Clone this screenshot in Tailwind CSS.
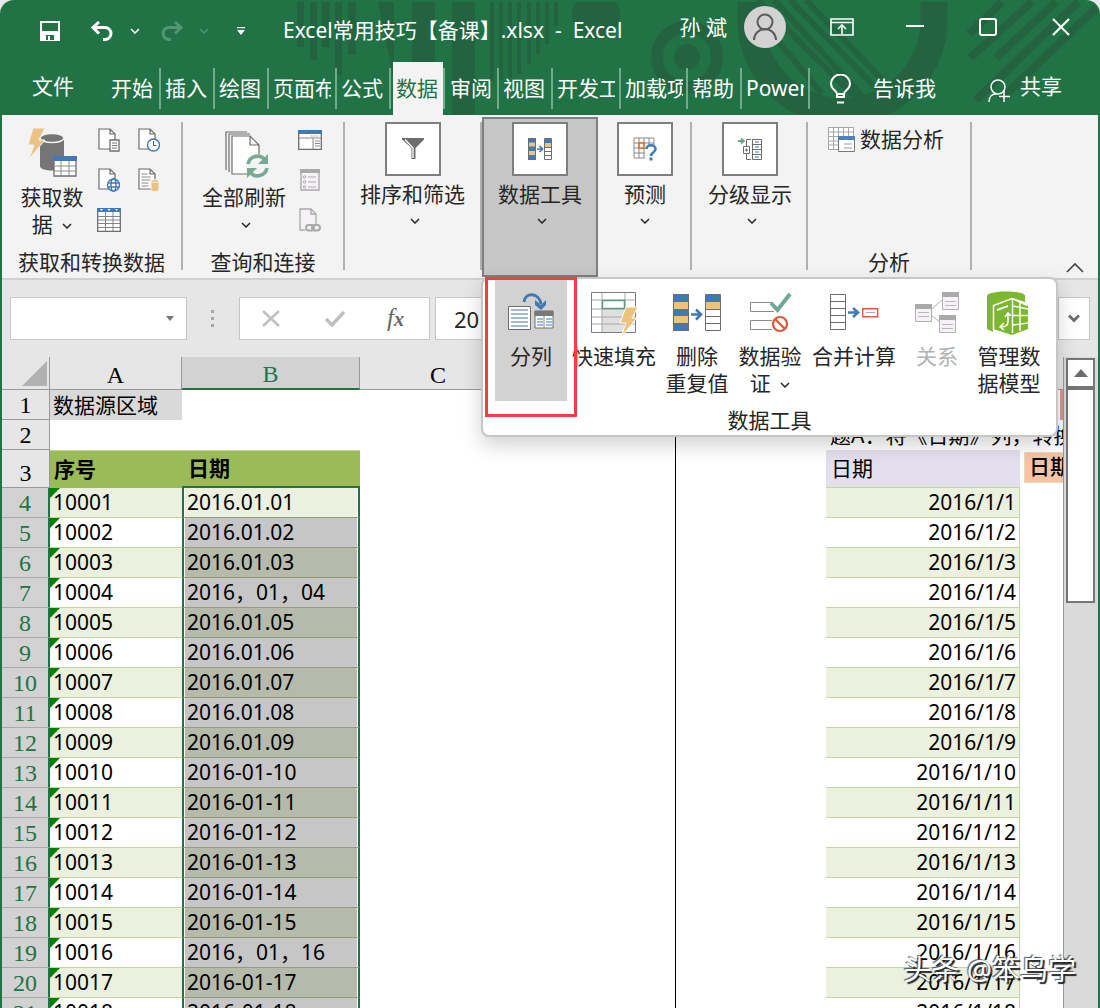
<!DOCTYPE html>
<html lang="zh-CN">
<head>
    <meta charset="UTF-8">
    <meta name="viewport" content="width=device-width, initial-scale=1.0">
    <title>Excel常用技巧【备课】.xlsx - Excel</title>
    <script src="https://cdn.jsdelivr.net/npm/@tailwindcss/browser@4"></script>
</head>
<body class="bg-[#e9e9e9] font-['Noto_Sans','Noto_Sans_CJK_SC',sans-serif] text-[21px] leading-[27px] text-[#262626]">

<!-- Shared icons -->
<svg class="hidden">
    <symbol id="chevron" viewBox="0 0 10 6"><path d="M1 1l4 4 4-4" fill="none" stroke="currentColor" stroke-width="1.5"/></symbol>
    <symbol id="page" viewBox="0 0 18 22"><path d="M1 1h11l5 5v15H1zM12 1v5h5" fill="#fff" stroke="#6d6d6d" stroke-width="1.2"/></symbol>
</svg>

<div class="relative flex h-screen flex-col overflow-hidden rounded-t-[14px] bg-[#217346]">

    <!-- Title bar and tabs -->
    <header class="relative shrink-0 text-white">
        <svg class="absolute inset-0 h-full w-full" viewBox="0 0 1100 115" preserveAspectRatio="xMidYMin slice" fill="#23633f" stroke="#23633f" stroke-width="0">
            <path d="M297 2h7v45h-7zM310 2h7v58h-7zM322 2h8v45h-8zM335 2h7v73h-7zM348 2h8v53h-8z"/>
            <path d="M378 2h16v78zM412 2h23v113h-23zM452 2h23v113h-23z"/>
            <path d="M490 2h4v80h-4zM499 2h4v78h-4zM508 2h4v76h-4zM517 2h4v72h-4zM527 2h4v62h-4zM536 2h4v52h-4zM545 2h4v42h-4zM554 2h4v24h-4z"/>
            <path d="M576 2h40a24 24 0 1 1-40 0z"/>
            <circle cx="687" cy="57" r="30" fill="none" stroke-width="12"/>
            <circle cx="687" cy="57" r="13"/>
            <path d="M751 2v18a90 90 0 0 0 183 0V2" fill="none" stroke-width="27"/>
            <path d="M758 0l104 104M774 0l90 98M790 0l94 96M752 10l70 84M806 0l86 90" stroke-width="6" fill="none"/>
            <path d="M1002 2l-33 32M1032 2l-62 56M1056 2l-60 56M1078 2l-102 98M1096 8l-96 92" stroke-width="8" fill="none"/>
        </svg>

        <div class="relative flex h-[62px] items-center pl-8">
            <button aria-label="保存" class="flex w-9 justify-center"><svg width="20" height="20" viewBox="0 0 20 20"><path d="M1 1h18v18H1z" fill="none" stroke="#fff" stroke-width="2"/><path d="M2 11h16" stroke="#fff" stroke-width="2"/><path d="M2 12h16v7H2z" fill="#fff"/><path d="M6 14h8v5H6z" fill="#217346"/><path d="M8 15h2v4H8z" fill="#fff"/></svg></button>
            <button aria-label="撤消" class="ml-[18px] flex w-8 justify-center"><svg width="24" height="20" viewBox="0 0 24 20" fill="none" stroke="#fff" stroke-width="3"><path d="M9 1L3 6.500l6 6M3 6.500h12a6 6 0 0 1 0 12h-2"/></svg></button>
            <button aria-label="撤消选项" class="ml-2 flex w-[18px] justify-center"><svg width="10" height="6"><use href="#chevron"/></svg></button>
            <button aria-label="恢复" class="ml-3 flex w-8 justify-center"><svg width="24" height="20" viewBox="0 0 24 20" fill="none" stroke="#539672" stroke-width="3"><path d="M15 1l6 5.500-6 6M21 6.500H9a6 6 0 0 0 0 12h2"/></svg></button>
            <button aria-label="恢复选项" class="ml-[7px] flex w-[18px] justify-center text-[#539672]"><svg width="10" height="6"><use href="#chevron"/></svg></button>
            <button aria-label="自定义快速访问工具栏" class="ml-[19px] flex w-[18px] justify-center"><svg width="8" height="8" viewBox="0 0 8 8" fill="#fff"><path d="M0 0h8v1.200H0zM0 3h8L4 8z"/></svg></button>
            <h1 class="ml-[33px] pb-[2px] whitespace-pre">Excel常用技巧【备课】.xlsx  -  Excel</h1>
            <div class="mr-[19px] ml-auto flex items-center pb-2">
                <span class="mr-[17px] whitespace-nowrap">孙 斌</span>
                <button aria-label="帐户" class="mr-9 size-[42px] rounded-full bg-[#d2d2d2]"><svg width="42" height="42" viewBox="0 0 42 42" fill="none" stroke="#5c5c5c" stroke-width="2"><circle cx="21" cy="16" r="7.500"/><path d="M10 34a11 11 0 0 1 22 0"/></svg></button>
                <button aria-label="功能区显示选项" class="mr-[33px] flex w-10 justify-center"><svg width="24" height="18" viewBox="0 0 24 18" fill="none" stroke="#fff" stroke-width="1.600"><path d="M1 1h22v16H1zM1 4.500h22M12 16V7M8 11l4-4 4 4"/></svg></button>
                <button aria-label="最小化" class="mr-[33px] flex w-10 justify-center"><svg width="18" height="18"><path d="M0 8h18" stroke="#fff" stroke-width="2"/></svg></button>
                <button aria-label="最大化" class="mr-[33px] flex w-10 justify-center"><svg width="18" height="18"><rect x="1" y="1" width="16" height="16" rx="2" fill="none" stroke="#fff" stroke-width="2"/></svg></button>
                <button aria-label="关闭" class="flex w-10 justify-center"><svg width="18" height="18"><path d="M1 1l16 16M17 1L1 17" stroke="#fff" stroke-width="2"/></svg></button>
            </div>
        </div>

        <nav class="relative flex h-[53px] items-center whitespace-nowrap">
            <a href="#" class="w-[107px] pb-1 pl-8">文件</a>
            <a href="#" class="flex h-[41px] w-[54px] items-center border-r-2 border-[#71ab89] pl-1">开始</a>
            <a href="#" class="flex h-[41px] w-[54px] items-center border-r-2 border-[#71ab89] pl-1">插入</a>
            <a href="#" class="flex h-[41px] w-[54px] items-center border-r-2 border-[#71ab89] pl-1">绘图</a>
            <a href="#" class="flex h-[41px] w-[68px] items-center border-r-2 border-[#71ab89] pl-1"><span class="w-[58px] overflow-hidden">页面布局</span></a>
            <a href="#" class="flex h-[41px] w-[54px] items-center border-r-2 border-[#71ab89] pl-1">公式</a>
            <a href="#" class="ml-[2px] flex h-full w-[50px] items-center bg-[#f3f3f3] pl-[3px] text-[#217346]">数据</a>
            <a href="#" class="flex h-[41px] w-[56px] items-center border-x-2 border-[#71ab89] pl-[5px]">审阅</a>
            <a href="#" class="flex h-[41px] w-[54px] items-center border-r-2 border-[#71ab89] pl-1">视图</a>
            <a href="#" class="flex h-[41px] w-[68px] items-center border-r-2 border-[#71ab89] pl-1"><span class="w-[58px] overflow-hidden">开发工具</span></a>
            <a href="#" class="flex h-[41px] w-[67px] items-center border-r-2 border-[#71ab89] pl-1"><span class="w-[58px] overflow-hidden">加载项</span></a>
            <a href="#" class="flex h-[41px] w-[54px] items-center border-r-2 border-[#71ab89] pl-1">帮助</a>
            <a href="#" class="flex h-[41px] w-[68px] items-center border-r-2 border-[#71ab89] pl-1"><span class="w-[58px] overflow-hidden">Power Pivot</span></a>
            <a href="#" class="ml-5 flex items-center gap-[22px]"><svg width="21" height="30" viewBox="0 0 21 30" fill="none" stroke="#fff" stroke-width="2"><path d="M7 23v-3c0-3-6-5-6-10a9.500 9.500 0 0 1 19 0c0 5-6 7-6 10v3zM7 20h7M7 28.500h7"/></svg>告诉我</a>
            <button class="mr-[38px] ml-auto flex items-center gap-[10px] pb-1"><svg class="mt-2" width="22" height="24" viewBox="0 0 22 24" fill="none" stroke="#fff" stroke-width="1.500"><circle cx="10" cy="8" r="7"/><path d="M1 23c0-5 3-8 7-8M16 12v11M11 17.500h11"/></svg>共享</button>
        </nav>
    </header>

    <div class="mx-[2px] flex min-h-0 flex-1 flex-col">

        <!-- Ribbon -->
        <section class="relative z-20 flex h-[165px] shrink-0 border-b-2 border-[#d0d0d0] bg-[#f3f3f3] whitespace-nowrap">
            <div class="flex w-[179px] flex-col justify-between pt-[5px] pb-[2px]">
                <div class="flex pl-4">
                    <button class="flex w-[68px] flex-col items-center pt-2">
                        <svg width="50" height="50" viewBox="0 0 50 50">
                            <path d="M13 10v28c0 6 24 6 24 0V10z" fill="#757575"/><ellipse cx="25" cy="10" rx="12" ry="4.500" fill="#757575" stroke="#f3f3f3" stroke-width="1.500"/>
                            <path d="M6 0h12l-6 12h6L2 31l5-14H1z" fill="#eac282" stroke="#f3f3f3"/>
                            <path d="M27 29h22v19H27z" fill="#fff" stroke="#6d6d6d" stroke-width="1.300"/><path d="M26 28h24v5H26z" fill="#4179b4"/><path d="M27 38h22M27 43h22M34 33v15M42 33v15" stroke="#8a8a8a"/>
                        </svg>
                        <span class="mt-[6px]">获取数<br>据 <svg class="ml-1 inline" width="10" height="6"><use href="#chevron"/></svg></span>
                    </button>
                    <div class="ml-[3px] grid auto-rows-[40px] grid-cols-[40px_40px] place-items-center">
                        <button aria-label="从文本/CSV"><svg width="22" height="24" viewBox="0 0 22 24"><use href="#page" width="18" height="22"/><path d="M12 12h9v11h-9z" fill="#fff" stroke="#6d6d6d" stroke-width="1.300"/><path d="M14 15h5M14 17.500h5M14 20h5" stroke="#777"/></svg></button>
                        <button aria-label="最近使用的源"><svg width="22" height="24" viewBox="0 0 22 24"><use href="#page" width="18" height="22"/><circle cx="15.500" cy="17" r="6" fill="#fff" stroke="#4179b4" stroke-width="1.400"/><path d="M15.500 13v4.500h3" fill="none" stroke="#555"/></svg></button>
                        <button aria-label="自网站"><svg width="22" height="24" viewBox="0 0 22 24"><use href="#page" width="18" height="22"/><g fill="#fff" stroke="#4179b4" stroke-width="1.400"><circle cx="15.500" cy="17" r="6"/><ellipse cx="15.500" cy="17" rx="2.500" ry="6"/><path d="M10 15h11M10 19h11"/></g></svg></button>
                        <button aria-label="现有连接"><svg width="22" height="24" viewBox="0 0 22 24"><use href="#page" width="18" height="22"/><path d="M3.500 6h6M3.500 9h9M3.500 12h9M3.500 15h7M3.500 18h7" stroke="#888"/><path d="M13 13v9c0 2 8 2 8 0v-9z" fill="#eac282" stroke="#f3f3f3"/><ellipse cx="17" cy="13" rx="4" ry="1.500" fill="#eac282" stroke="#fff" stroke-width=".7"/></svg></button>
                        <button aria-label="自表格/区域"><svg width="24" height="24" viewBox="0 0 24 24"><path d="M.7.7h22.600v22.600H.7z" fill="#fff" stroke="#6d6d6d" stroke-width="1.300"/><path d="M0 0h24v4H0z" fill="#4179b4"/><path d="M3 1h3L4.500 3zM10.500 1h3L12 3zM18 1h3l-1.500 2z" fill="#fff"/><path d="M1 8.500h22M1 12h22M1 15.500h22M1 19.500h22M8.500 4v19M16 4v19" stroke="#858585"/></svg></button>
                    </div>
                </div>
                <h2 class="text-center">获取和转换数据</h2>
            </div>
            <div class="mt-[7px] h-[148px] w-[2px] bg-[#b1b1b1]"></div>

            <div class="flex w-40 flex-col justify-between pt-[5px] pb-[2px]">
                <div class="flex pl-[17px]">
                    <button class="flex w-[88px] flex-col items-center pt-2">
                        <svg width="50" height="50" viewBox="0 0 50 50">
                            <path d="M7 42V4h21M10 44V6h21" fill="none" stroke="#6d6d6d" stroke-width="1.200"/>
                            <path d="M13 8h18l9 9v29H13zM31 8v9h9" fill="#fff" stroke="#6d6d6d" stroke-width="1.200"/>
                            <circle cx="38.500" cy="38" r="12" fill="#f3f3f3"/>
                            <path d="M29 36a9.500 9.500 0 0 1 17-4M48 40a9.500 9.500 0 0 1-17 4" fill="none" stroke="#77aa94" stroke-width="3.600"/><path d="M49 26v10H39zM28 50V40h10z" fill="#77aa94"/>
                        </svg>
                        <span class="mt-[6px] flex flex-col items-center">全部刷新<svg class="mt-[11px] ml-1" width="10" height="6"><use href="#chevron"/></svg></span>
                    </button>
                    <div class="ml-[2px] grid auto-rows-[40px] grid-cols-[40px] place-items-center">
                        <button aria-label="查询和连接"><svg width="24" height="20" viewBox="0 0 24 20"><path d="M.7.7h22.600v18.600H.7z" fill="#fff" stroke="#6d6d6d" stroke-width="1.300"/><path d="M0 0h24v4H0z" fill="#4179b4"/><path d="M15 8v11M1 8h22M17 11h5M17 13.500h5M17 16h5" stroke="#888"/><path d="M13 6h8" stroke="#999" stroke-dasharray="1.500 1"/></svg></button>
                        <button aria-label="属性"><svg width="20" height="22" viewBox="0 0 20 22"><path d="M1 1h18v20H1z" fill="#f6f2f7" stroke="#aaa" stroke-width="1.400"/><path d="M0 0h20v4H0z" fill="#aaa"/><path d="M8 8h8M8 13h8M8 18h8" stroke="#aaa"/><g fill="none" stroke="#aaa"><circle cx="4.500" cy="8" r="1.200"/><circle cx="4.500" cy="13" r="1.200"/><circle cx="4.500" cy="18" r="1.200"/></g></svg></button>
                        <button aria-label="编辑链接"><svg width="22" height="24" viewBox="0 0 22 24" fill="none" stroke="#aaa" stroke-width="1.300"><path d="M1 1h11l5 5v16H1zM12 1v5h5" fill="#f6f2f7"/><path d="M6 16h16v8H6z" fill="#f3f3f3" stroke="none"/><rect x="7" y="17" width="8" height="5.500" rx="2.700" stroke-width="2"/><rect x="13" y="17" width="8" height="5.500" rx="2.700" stroke-width="2"/></svg></button>
                    </div>
                </div>
                <h2 class="text-center">查询和连接</h2>
            </div>
            <div class="mt-[7px] h-[148px] w-[2px] bg-[#b1b1b1]"></div>

            <button class="flex w-[135px] flex-col items-center self-start pt-[7px]">
                <span class="flex h-[54px] w-14 items-center justify-center border-2 border-[#7f7f7f] bg-white"><svg width="22" height="22" viewBox="0 0 22 22"><path d="M0 0h22v1.500L13.500 10v11h-4V10L0 1.500z" fill="#6d6d6d"/><path d="M3 1.500l8 8.500v10" stroke="#fff" stroke-width="1.300" fill="none"/></svg></span>
                <span class="mt-[5px]">排序和筛选</span>
                <svg class="mt-[10px] ml-1" width="10" height="6"><use href="#chevron"/></svg>
            </button>
            <div class="mt-[7px] h-[148px] w-[2px] bg-[#b1b1b1]"></div>

            <div class="relative mt-[2px] h-40 w-[116px]">
                <button class="flex h-full w-full flex-col items-center border-2 border-[#7f7f7f] bg-[#c6c6c6] pt-[3px]">
                    <span class="flex h-[54px] w-14 items-center justify-center border-2 border-[#7f7f7f] bg-white"><svg width="24" height="22" viewBox="0 0 24 22"><path d="M0 0h8v22H0z" fill="#4179b4"/><path d="M1 4.500h6v4H1zM1 13h6v4H1z" fill="#eac282"/><path d="M.5.500h7v21h-7zM16.500.500h7v21h-7z" fill="none" stroke="#6d6d6d"/><path d="M17 1h6v4h-6z" fill="#4179b4"/><path d="M17 5h6v4h-6z" fill="#eac282"/><path d="M17 9.500h6M17 13.500h6M17 17.500h6" stroke="#6d6d6d"/><path d="M9 11h5M11.500 8l3 3-3 3" fill="none" stroke="#4179b4" stroke-width="1.700"/></svg></span>
                    <span class="mt-[5px]">数据工具</span>
                    <svg class="mt-[10px] ml-1" width="10" height="6"><use href="#chevron"/></svg>
                </button>

                <!-- Data tools drop-down -->
                <div class="absolute top-full -left-[1px] w-[577px] rounded-[8px] border-2 border-[#c6c6c6] bg-white shadow-[0_8px_20px_rgba(0,0,0,0.18)]">
                    <div class="flex gap-[2px] pt-[1px] pl-3">
                        <button class="flex h-[121px] w-[72px] flex-col items-center gap-[6px] bg-[#d2d2d2] pt-[11px]">
                            <svg width="50" height="46" viewBox="0 0 50 46"><path d="M2.500 15.500h22v23h-22z" fill="#fff" stroke="#6d6d6d"/><path d="M5 19h17M5 23h17M5 27h17M5 31h17M5 35h17" stroke="#4179b4" stroke-width="1.200"/><path d="M29 20h18v17H29z" fill="#fff" stroke="#6d6d6d"/><path d="M28.500 20h19v5h-19z" fill="#777"/><path d="M31 28h6M31 31h6M31 34h6M40 28h6M40 31h6M40 34h6" stroke="#4179b4"/><path d="M38 25v12" stroke="#888"/><path d="M18 11C19 1 33 1 35 13" fill="none" stroke="#4179b4" stroke-width="3"/><path d="M29 9l6 5 5-5v5l-5 5-6-5z" fill="#4179b4"/></svg>
                            <span>分列</span>
                        </button>
                        <button class="flex h-[121px] w-[90px] flex-col items-center gap-[6px] pt-[11px]">
                            <svg width="50" height="46" viewBox="0 0 50 46"><path d="M2.500 1.500h44v40h-44z" fill="#fff" stroke="#7b7b7b"/><path d="M13 18h23v23H13z" fill="#e0e0e0"/><path d="M3 9h43M3 18h43M3 26h43M3 33h43M13 2v39M36 2v39" stroke="#a6a6a6"/><path d="M13.500 9.500h22v8h-22z" fill="#fff" stroke="#5d9c83" stroke-width="1.500"/><path d="M37 16h12l-6 11h5L32 46l5-14h-6z" fill="#ecc27c" stroke="#fff"/></svg>
                            <span>快速填充</span>
                        </button>
                        <button class="flex h-[121px] w-[72px] flex-col items-center gap-[6px] pt-[11px]">
                            <svg width="50" height="46" viewBox="0 0 50 46"><path d="M1 3h16v37H1z" fill="#4179b4"/><path d="M2 11h14v7H2zM2 25h14v7H2z" fill="#ecc27c"/><path d="M1.500 3.500h15v36h-15zM33.500 3.500h15v36h-15z" fill="none" stroke="#6d6d6d"/><path d="M34 4h14v7H34z" fill="#4179b4"/><path d="M34 11h14v7H34z" fill="#ecc27c"/><path d="M34 18.500h14M34 25.500h14M34 32.500h14" stroke="#6d6d6d"/><path d="M19 23.500h9M24 18.500l5 5-5 5" fill="none" stroke="#4179b4" stroke-width="2.600"/></svg>
                            <span>删除<br>重复值</span>
                        </button>
                        <button class="flex h-[121px] w-[70px] flex-col items-center gap-[6px] pt-[11px]">
                            <svg width="50" height="46" viewBox="0 0 50 46"><path d="M27 11.500H5.500v9H29M27 29.500H5.500v9H27" fill="none" stroke="#8a8a8a"/><path d="M26 12l6.500 7L45 3" fill="none" stroke="#72a893" stroke-width="4"/><circle cx="35" cy="33" r="7" fill="#fff" stroke="#d8593c" stroke-width="2.200"/><path d="M30 28l10 10" stroke="#d8593c" stroke-width="2.200"/></svg>
                            <span>数据验<br>证 <svg class="ml-1 inline" width="10" height="6"><use href="#chevron"/></svg></span>
                        </button>
                        <button class="flex h-[121px] w-[94px] flex-col items-center gap-[6px] pt-[11px]">
                            <svg width="50" height="46" viewBox="0 0 50 46"><path d="M1.500 3.500h15v35h-15zM1.500 10.500h15M1.500 17.500h15M1.500 24.500h15M1.500 31.500h15" fill="none" stroke="#6d6d6d"/><path d="M19 21.500h8M24 17l5 4.500-5 4.500" fill="none" stroke="#4179b4" stroke-width="2.600"/><path d="M33.700 17.700h15v8h-15z" fill="#fff" stroke="#d8593c" stroke-width="1.400"/><path d="M37 21.500h9" stroke="#aaa"/></svg>
                            <span>合并计算</span>
                        </button>
                        <button disabled class="flex h-[121px] w-[68px] flex-col items-center gap-[6px] pt-[11px] text-[#b1b1b1]">
                            <svg width="50" height="46" viewBox="0 0 50 46"><path d="M19 19L31 8M19 24l10 8" stroke="#b1b1b1"/><path d="M3.500 13.500h16v17h-16zM30.500 1.500h16v17h-16zM27.500 24.500h16v17h-16z" fill="#f6f2f7" stroke="#b1b1b1"/><path d="M3 13h17v5H3zM30 1h17v5H30zM27 24h17v5H27z" fill="#aaa"/><path d="M6 21.500h11M6 25.500h11M33 10.500h11M33 14.500h11M30 33.500h11M30 37.500h11" stroke="#b9b9b9"/></svg>
                            <span>关系</span>
                        </button>
                        <button class="flex h-[121px] w-[72px] flex-col items-center gap-[6px] pt-[11px]">
                            <svg width="50" height="46" viewBox="0 0 50 46"><path d="M3 5c0-6 38-6 38 0v6L29 7 9 15v26l-6-3z" fill="#7cb82f"/><path d="M9 14l19-7 16 7v24l-16 6-19-6z" fill="#7cb82f"/><path d="M9.500 39V14.500L28 7.500l15.500 7" fill="none" stroke="#fff" stroke-width="1.500"/><path d="M28.500 8v34M36 11v29M29 15l15 3M29 24.500h15M29 34l15-2" stroke="#fff" stroke-width="1.400"/><path d="M13 20l11-4v-2l-11 4z" fill="#fff"/><path d="M24 23v8c0 4-4 5-8 5M21 26l3-4 3 3M20 32l-4 4 4 3" fill="none" stroke="#fff" stroke-width="1.500"/></svg>
                            <span>管理数<br>据模型</span>
                        </button>
                    </div>
                    <h2 class="mt-[6px] mb-[1px] text-center">数据工具</h2>
                    <div class="pointer-events-none absolute -top-[2px] left-[2px] h-[140px] w-[92px] border-3 border-[#fa3c3c]"></div>
                </div>
            </div>

            <button class="flex w-[94px] flex-col items-center self-start pt-[7px]">
                <span class="flex h-[54px] w-14 items-center justify-center border-2 border-[#7f7f7f] bg-white"><svg width="24" height="24" viewBox="0 0 24 24"><path d="M1 1h20v20H1zM6 1v20M11 1v20M16 1v20M1 6h20M1 11h20M1 16h20" fill="none" stroke="#8a8a8a"/><path d="M6 6h5v5H6z" fill="#fff" stroke="#e0671f" stroke-width="1.500"/><path d="M12 8h11v16H12z" fill="#fff"/><path d="M13.500 12c0-5 9-5 9 0 0 4-4.500 3-4.500 7" fill="none" stroke="#4179b4" stroke-width="2.600"/><path d="M16.500 20.500h3v3h-3z" fill="#4179b4"/></svg></span>
                <span class="mt-[5px]">预测</span>
                <svg class="mt-[10px]" width="10" height="6"><use href="#chevron"/></svg>
            </button>
            <div class="mt-[7px] -ml-[2px] h-[148px] w-[2px] bg-[#b1b1b1]"></div>

            <button class="flex w-[114px] flex-col items-center self-start pt-[7px] pl-[2px]">
                <span class="flex h-[54px] w-14 items-center justify-center border-2 border-[#7f7f7f] bg-white"><svg width="24" height="24" viewBox="0 0 24 24" fill="none" stroke="#6d6d6d"><path d="M13 2.500H8.500v7M13 22.500H8.500v-6M5.500 9.500h6v7h-6zM7 13h3M8.500 11.500v3M14.500 2.500h9v20h-9zM14.500 7.500h9M14.500 12.500h9M14.500 17.500h9"/><path d="M17 5h4M17 10h4M17 15h4M17 20h4" stroke="#4179b4"/><path d="M0 4h5M3 1.500L6 4 3 6.500" stroke="#6aa58c" stroke-width="1.800"/></svg></span>
                <span class="mt-[5px]">分级显示</span>
                <svg class="mt-[10px] ml-1" width="10" height="6"><use href="#chevron"/></svg>
            </button>
            <div class="mt-[7px] h-[148px] w-[2px] bg-[#b1b1b1]"></div>

            <div class="flex w-[162px] flex-col justify-between pt-[11px] pb-[2px]">
                <button class="flex items-center gap-[5px] pl-5"><svg width="27" height="27" viewBox="0 0 27 27"><path d="M.5 1.500h25v22H.5zM.5 6h25M.5 10.500h25M.5 15h25M.5 19h25M5.500 1.500v22M10.500 1.500v22M15.500 1.500v22M20.500 1.500v22" fill="#fff" stroke="#a6a6a6"/><path d="M10.500 10.500h16v15h-16z" fill="#fff" stroke="#777"/><path d="M10 10h17v4H10z" fill="#4a82bd"/><path d="M16 18h8M16 22h8" stroke="#999"/></svg>数据分析</button>
                <h2 class="text-center">分析</h2>
            </div>
            <div class="mt-[7px] h-[148px] w-[2px] bg-[#b1b1b1]"></div>
            <button aria-label="折叠功能区" class="mr-[14px] mb-[5px] ml-auto self-end"><svg width="18" height="11"><path d="M1 10l8-8 8 8" fill="none" stroke="#444" stroke-width="1.600"/></svg></button>
        </section>

        <!-- Formula bar -->
        <div class="flex shrink-0 items-center bg-[#e6e6e6] pt-[17px] pr-2 pb-[17px] pl-2">
            <div class="flex h-[43px] w-[177px] items-center border border-[#c6c6c6] bg-white pr-3">
                <input aria-label="名称框" class="min-w-0 flex-1 px-2 outline-none">
                <button aria-label="名称列表"><svg width="8" height="5"><path d="M0 0h8L4 5z" fill="#777"/></svg></button>
            </div>
            <svg class="ml-[24px]" width="3" height="17" fill="#a6a6a6"><path d="M0 0h3v3H0zM0 7h3v3H0zM0 14h3v3H0z"/></svg>
            <div class="ml-[25px] flex h-[43px] w-[191px] items-center border border-[#c6c6c6] bg-white pl-[22px]">
                <button aria-label="取消"><svg width="18" height="17"><path d="M1 1l16 15M17 1L1 16" stroke="#c0c0c0" stroke-width="2.500"/></svg></button>
                <button aria-label="输入" class="ml-[45px]"><svg width="20" height="17"><path d="M1 9l6 6L19 2" fill="none" stroke="#c0c0c0" stroke-width="3.500"/></svg></button>
                <button aria-label="插入函数" class="ml-[42px] font-['Liberation_Serif',serif] text-[25px] text-[#666] italic">f<span class="text-[20px] font-bold">x</span></button>
            </div>
            <input aria-label="编辑栏" value="2016.01.01" class="ml-[5px] h-[43px] min-w-0 flex-1 border border-[#c6c6c6] bg-white pl-[18px] text-[22px] outline-none">
            <button aria-label="展开编辑栏" class="flex h-[43px] w-8 items-center justify-center border border-[#c6c6c6] bg-white"><svg width="12" height="9"><path d="M1 1.500l5 5 5-5" fill="none" stroke="#6d6d6d" stroke-width="3"/></svg></button>
        </div>

        <!-- Worksheet -->
        <div class="flex min-h-0 flex-1">
            <div class="min-w-0 flex-1 overflow-hidden bg-white">
                <table class="w-[1240px] table-fixed border-separate border-spacing-0 whitespace-nowrap text-black">
                    <colgroup>
                        <col class="w-12"><col class="w-[132px]"><col class="w-[178px]"><col class="w-[156px]"><col class="w-[160px]"><col class="w-[150px]"><col class="w-[194px]"><col class="w-[4px]"><col>
                    </colgroup>
                    <thead>
                        <tr class="h-[33px] bg-[#e6e6e6] font-['Liberation_Serif',serif] text-[24px]">
                            <th class="border-r border-b border-[#999] bg-[#e6e6e6] p-0"><svg class="mr-[2px] ml-auto" width="25" height="25"><path d="M25 0v25H0z" fill="#b1b1b1"/></svg></th>
                            <th class="border-r border-b border-[#999] p-0 pt-1 font-normal">A</th>
                            <th class="border-r border-b-2 border-r-[#999] border-b-[#217346] bg-[#d2d2d2] p-0 pt-1 font-normal text-[#217346]">B</th>
                            <th class="border-b border-[#999] p-0 pt-1 font-normal">C</th>
                            <th class="border-b border-[#999] p-0 pt-1 font-normal">D</th>
                            <th class="border-b border-[#999] p-0 pt-1 font-normal">E</th>
                            <th class="border-b border-[#999] p-0 pt-1 font-normal">F</th>
                            <th class="border-b border-[#999] p-0"></th>
                            <th class="border-b border-[#999] p-0"></th>
                        </tr>
                    </thead>
                    <tbody id="rows">
                        <tr class="h-[30px]">
                            <th class="border-r border-b border-[#999] bg-[#e6e6e6] p-0 align-bottom font-['Liberation_Serif',serif] text-[24px] font-normal">1</th>
                            <td class="bg-[#d9d9d9] p-0 pl-[3px]">数据源区域</td>
                            <td></td><td></td><td class="border-r border-black"></td><td></td><td></td><td></td>
                            <td class="p-0 pl-9"><div class="h-[30px] bg-[#d99694]"></div></td>
                        </tr>
                        <tr class="h-[30px]">
                            <th class="border-r border-b border-[#999] bg-[#e6e6e6] p-0 align-bottom font-['Liberation_Serif',serif] text-[24px] font-normal">2</th>
                            <td></td><td></td><td></td><td class="border-r border-black"></td><td></td>
                            <td class="p-0 pl-1" colspan="3">题A：将《日期》列，转换为日期格式</td>
                        </tr>
                        <tr class="h-[38px]">
                            <th class="border-r border-b border-[#999] bg-[#e6e6e6] p-0 align-bottom font-['Liberation_Serif',serif] text-[24px] font-normal">3</th>
                            <td class="border-t border-[#c4d79b] bg-[#9bbb59] p-0 pl-1 font-bold">序号</td>
                            <td class="border-t border-b-2 border-t-[#c4d79b] border-b-[#217346] bg-[#9bbb59] p-0 pl-[6px] font-bold">日期</td>
                            <td></td><td class="border-r border-black"></td><td></td>
                            <td class="border-b border-[#c4d79b] bg-[#e4dfec] p-0 pl-[5px]">日期</td>
                            <td></td>
                            <td class="p-0"><div class="mb-1 h-[31px] border border-[#ead9b8] bg-[#f6c4a4] pl-1 font-medium">日期</div></td>
                        </tr>
                    </tbody>
                </table>
            </div>

            <!-- Vertical scroll bar -->
            <div class="flex w-[35px] shrink-0 flex-col border-l border-[#999] bg-[#dadada] pt-[1px] pr-[3px] pl-[2px]">
                <button aria-label="向上滚动" class="flex h-[30px] items-center justify-center border-2 border-[#757575] bg-white"><svg width="14" height="8"><path d="M0 8h14L7 0z" fill="#6d6d6d"/></svg></button>
                <div class="h-[215px] border-2 border-[#757575] bg-white"></div>
            </div>
        </div>
    </div>

    <div class="absolute right-6 bottom-6 z-30 text-[28px] leading-[30px] text-white [text-shadow:2px_2px_1px_#222,-1px_-1px_1px_#555]">头条 @笨鸟学</div>
</div>

<script>
    const dates = [
        "2016.01.01", "2016.01.02", "2016.01.03", "2016，01，04", "2016.01.05", "2016.01.06",
        "2016.01.07", "2016.01.08", "2016.01.09", "2016-01-10", "2016-01-11", "2016-01-12",
        "2016-01-13", "2016-01-14", "2016-01-15", "2016，01，16", "2016-01-17", "2016-01-18"
    ];

    let html = "";
    dates.forEach((date, i) => {
        const band = i % 2 === 0 ? "bg-[#ebf1de]" : "bg-white";
        let selected = i % 2 === 0 ? "bg-[#b6baab]" : "bg-[#c6c6c6]";
        // the active cell keeps its own fill
        if (i === 0) selected = "bg-[#ebf1de]";

        html += `
            <tr class="h-[30px]">
                <th class="border-r-2 border-b border-r-[#217346] border-b-[#aaa] bg-[#d2d2d2] p-0 align-bottom font-['Liberation_Serif',serif] text-[24px] font-normal text-[#217346]">${i + 4}</th>
                <td class="relative border-b border-[#c4d79b] p-0 pl-[3px] ${band}"><span class="absolute top-0 left-0 border-t-[10px] border-r-[10px] border-t-[#008000] border-r-transparent"></span>${10001 + i}</td>
                <td class="border-x-2 border-b border-x-[#217346] border-b-[#939c7d] p-0 pl-[3px] shadow-[inset_1px_0_0_#fff,inset_-1px_0_0_#fff] ${selected}">${date}</td>
                <td></td>
                <td class="border-r border-black"></td>
                <td></td>
                <td class="border-r border-b border-[#c4d79b] p-0 pr-[3px] text-right ${band}">2016/1/${i + 1}</td>
                <td></td>
                <td></td>
            </tr>
        `;
    });
    document.getElementById("rows").innerHTML += html;
</script>
</body>
</html>
